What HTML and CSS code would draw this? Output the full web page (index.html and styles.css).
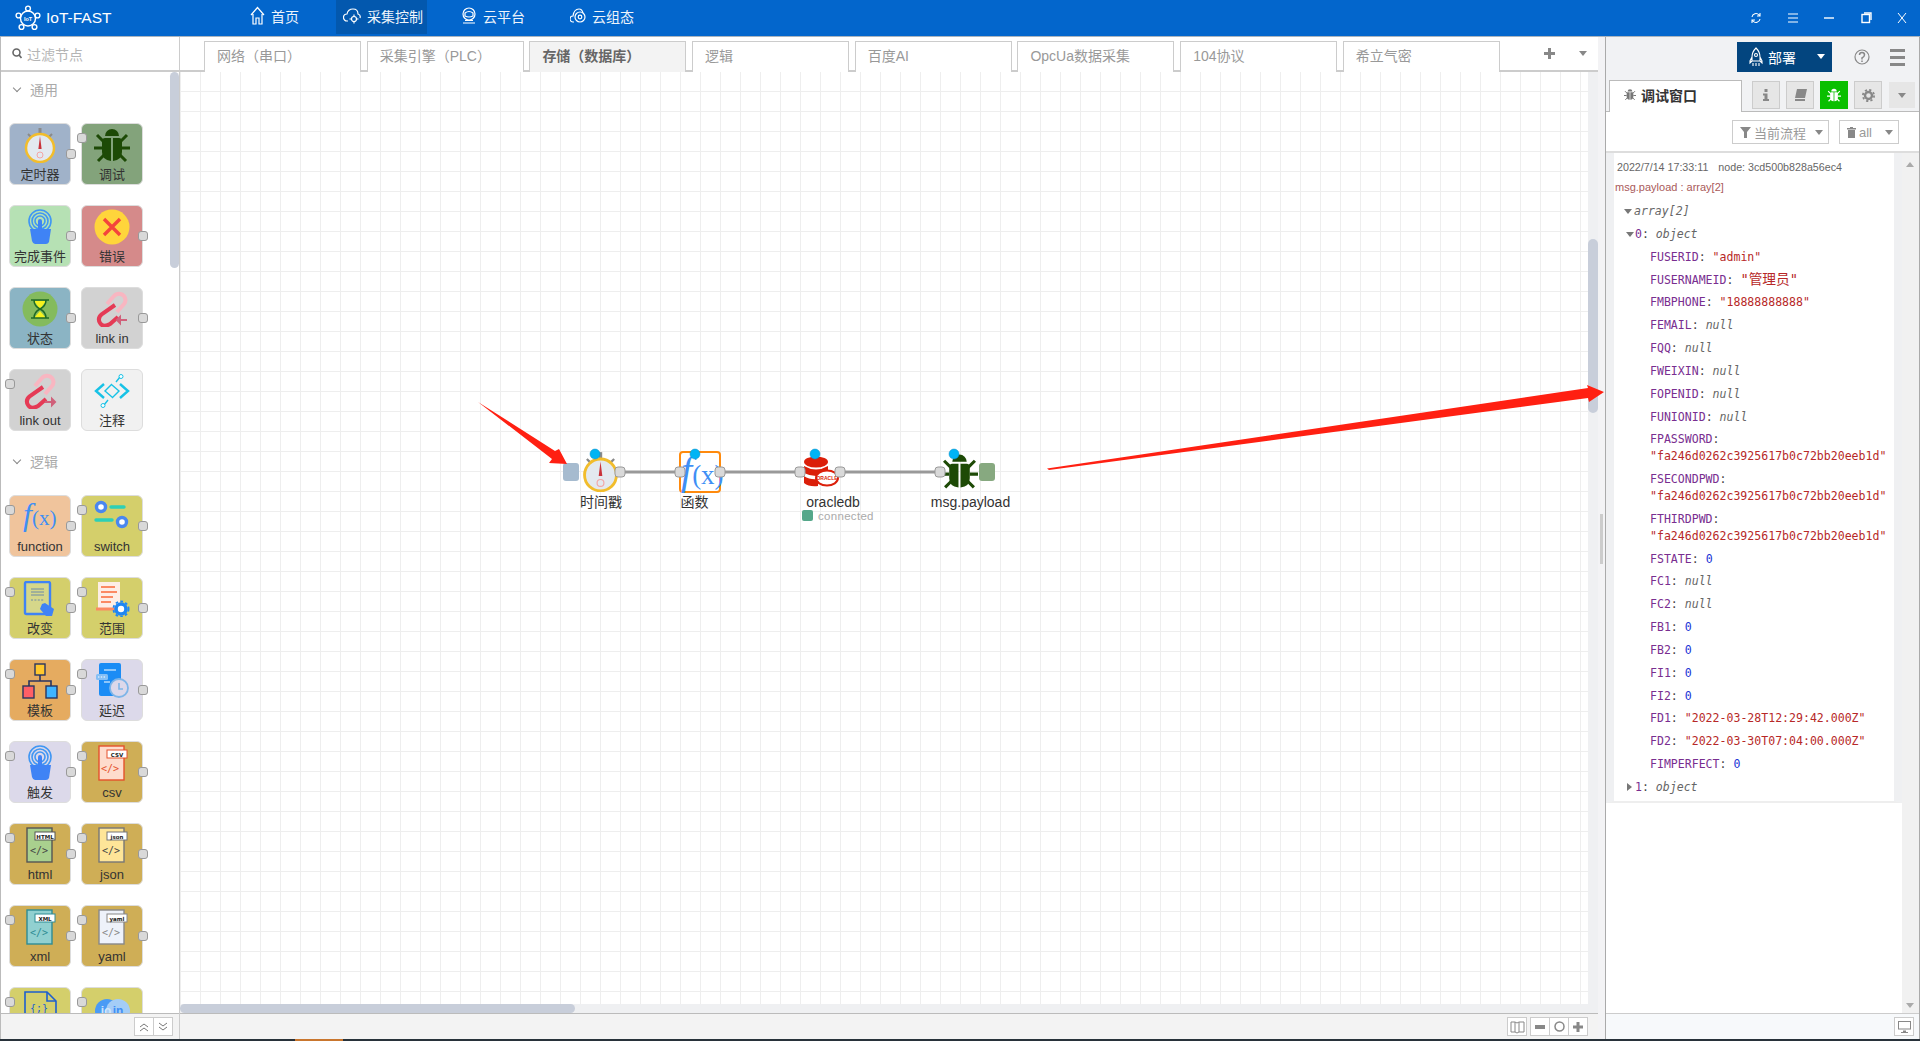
FILE: index.html
```html
<!DOCTYPE html>
<html lang="zh">
<head>
    <meta charset="UTF-8">
    <title>IoT-FAST</title>
    <link rel="stylesheet" href="styles.css">
</head>
<body>
    <!-- shared node icons -->
    <svg class="defs" width="0" height="0">
        <symbol id="i-watch" viewBox="0 0 36 36">
            <rect x="16.5" y="1" width="3" height="6" fill="#8a8a8a"/>
            <path d="M6 7l3 3M30 7l-3 3" stroke="#8a8a8a" stroke-width="2"/>
            <circle cx="18" cy="21" r="14" fill="#e3e9ef" stroke="#f2bd2c" stroke-width="2.5"/>
            <path d="M18 9l1.6 13h-3.200z" fill="#c9333a"/>
            <circle cx="18" cy="28" r="3" fill="none" stroke="#f3a5a5"/>
        </symbol>
        <symbol id="i-bug" viewBox="0 0 36 36">
            <path d="M11 9a7 7 0 0 1 14 0z" fill="#1d4a06"/>
            <path d="M17 11h-6q-3 0-3 4v10q0 8 9 9zM19 11h6q3 0 3 4v10q0 8-9 9z" fill="#1d4a06"/>
            <path d="M10 15l-7-7M26 15l7-7M8 21H0M28 21h8M10 28l-6 6M26 28l6 6" stroke="#1d4a06" stroke-width="3"/>
        </symbol>
        <symbol id="i-touch" viewBox="0 0 36 36">
            <g fill="none" stroke="#3f96f3" stroke-width="1.6">
                <circle cx="18" cy="12" r="11"/>
                <circle cx="18" cy="12" r="8"/>
                <circle cx="18" cy="12" r="5"/>
            </g>
            <path d="M16 12a2 2 0 0 1 4 0v8h9l-2 13q-1 2-3 2H13q-2 0-3-3l-2-12h8z" fill="#3f83f5"/>
        </symbol>
        <symbol id="i-error" viewBox="0 0 36 36">
            <circle cx="18" cy="18" r="17.5" fill="#ffd53b"/>
            <path d="M10 10l16 16M26 10L10 26" stroke="#f4453c" stroke-width="3.4"/>
        </symbol>
        <symbol id="i-status" viewBox="0 0 36 36">
            <circle cx="18" cy="18" r="17.5" fill="#84bb5d"/>
            <path d="M12 10l6 8 6-8zM12 27l6-7 6 7z" fill="#f5f21e"/>
            <path d="M9 9h18M9 27h18M12 9q0 6 6 9 6-3 6-9M12 27q0-6 6-9 6 3 6 9" fill="none" stroke="#1f6b26" stroke-width="1.5"/>
        </symbol>
        <symbol id="i-linkin" viewBox="0 0 36 36">
            <path d="M13 13l7-8a6.500 6.500 0 0 1 10 0q3 4 0 8l-7 8" fill="none" stroke="#f8b6c1" stroke-width="4"/>
            <path d="M21 14L8 23q-5 4-2 9t10 1l8-7" fill="none" stroke="#e53a55" stroke-width="4"/>
            <path d="M23 29h10M23 29l3-3v6z" stroke="#d0607a" stroke-width="2" fill="#d0607a"/>
        </symbol>
        <symbol id="i-linkout" viewBox="0 0 36 36">
            <path d="M13 13l7-8a6.500 6.500 0 0 1 10 0q3 4 0 8l-7 8" fill="none" stroke="#f8b6c1" stroke-width="4"/>
            <path d="M21 14L8 23q-5 4-2 9t10 1l8-7" fill="none" stroke="#e53a55" stroke-width="4"/>
            <path d="M23 29h10M33 29l-3-3v6z" stroke="#d0607a" stroke-width="2" fill="#d0607a"/>
        </symbol>
        <symbol id="i-comment" viewBox="0 0 36 36">
            <g fill="none" stroke="#17c2e6" stroke-width="2.4">
                <path d="M10 11l-8 7 8 7M26 11l8 7-8 7"/>
                <path d="M18 11l-7 7 7 6M18 25l7-7-7-6" stroke-width="1.4"/>
            </g>
            <path d="M26 4l-4 5M10 32l4-5" stroke="#17c2e6" stroke-width="1.4"/>
            <circle cx="27" cy="3.500" r="2" fill="#fff" stroke="#17c2e6"/>
            <circle cx="9" cy="32.500" r="2" fill="#fff" stroke="#17c2e6"/>
        </symbol>
        <symbol id="i-switch" viewBox="0 0 36 36">
            <circle cx="7" cy="8" r="4.500" fill="#fff" stroke="#4a87ef" stroke-width="3.400"/>
            <circle cx="28" cy="23" r="4.500" fill="#fff" stroke="#4a87ef" stroke-width="3.400"/>
            <path d="M17 8h13M2 21h16" stroke="#2dd0b6" stroke-width="3.400" stroke-linecap="round"/>
        </symbol>
        <symbol id="i-change" viewBox="0 0 36 36">
            <rect x="3" y="1" width="25" height="32" rx="1.500" fill="#d5d78a" stroke="#3f83f5" stroke-width="2.400"/>
            <path d="M9 8h13M9 11h13M9 14h13" stroke="#6d8aa8"/>
            <path d="M9 19h13" stroke="#6d8aa8" stroke-dasharray="2 1.400"/>
            <path d="M20 23l3-1 9 6-2 7-6 0-6-7z" fill="#3f83f5"/>
        </symbol>
        <symbol id="i-range" viewBox="0 0 36 36">
            <rect x="4" y="1" width="22" height="28" fill="#fdeee6"/>
            <path d="M7 6h14M7 11h16M7 16h12M7 21h10" stroke="#fb8a63" stroke-width="2"/>
            <path d="M2 28h20" stroke="#fb8a63" stroke-width="3"/>
            <circle cx="27" cy="28" r="5" fill="#fff" stroke="#1d86f5" stroke-width="3.600"/>
            <circle cx="27" cy="28" r="7.600" fill="none" stroke="#1d86f5" stroke-width="1.800" stroke-dasharray="2.600 2.400"/>
        </symbol>
        <symbol id="i-template" viewBox="0 0 36 36">
            <path d="M18 12v6M7 26v-8h22v8" fill="none" stroke="#2a3560" stroke-width="1.600"/>
            <rect x="13" y="1" width="10" height="11" fill="#ffc72c" stroke="#2a3560" stroke-width="1.400"/>
            <rect x="1" y="23" width="11" height="12" fill="#ff5f66" stroke="#2a3560" stroke-width="1.400"/>
            <rect x="24" y="23" width="11" height="12" fill="#3fb4ff" stroke="#2a3560" stroke-width="1.400"/>
        </symbol>
        <symbol id="i-delay" viewBox="0 0 36 36">
            <rect x="5" y="0" width="22" height="33" rx="2" fill="#1b8cf5"/>
            <path d="M10 7h12M10 19h6" stroke="#fff" stroke-width="1.200"/>
            <rect x="2" y="11" width="12" height="6" rx="1.500" fill="#86bff5"/>
            <path d="M4 14h8" stroke="#fff" stroke-dasharray="1.400 1.400"/>
            <circle cx="25" cy="25" r="9" fill="#dcd8ea" stroke="#7eb5e8" stroke-width="1.800"/>
            <path d="M25 20v6h4" fill="none" stroke="#7eb5e8" stroke-width="1.600"/>
        </symbol>
        <symbol id="i-oracle" viewBox="0 0 36 32">
            <ellipse cx="13" cy="6" rx="12" ry="5.500" fill="#db1f0a"/>
            <path d="M1 10q12 7 24 0v7q-12 6-24 0zM1 20q6 4 14 3v7Q6 31 1 27z" fill="#db1f0a"/>
            <ellipse cx="24" cy="22" rx="11" ry="7.500" fill="#fff" stroke="#db1f0a" stroke-width="2"/>
            <text x="24" y="24" class="oracle-txt" text-anchor="middle">ORACLE</text>
        </symbol>
    </svg>

    <header class="topbar">
        <div class="logo">
            <svg width="26" height="26" viewBox="0 0 26 26" fill="none" stroke="#fff" stroke-width="1.400">
                <circle cx="13" cy="13.500" r="7.500"/>
                <circle cx="13" cy="3.500" r="2.400"/>
                <circle cx="3.500" cy="10.500" r="2.400"/>
                <circle cx="22.500" cy="10.500" r="2.400"/>
                <circle cx="6.500" cy="22" r="2.400"/>
                <circle cx="19.500" cy="22" r="2.400"/>
                <text x="13" y="15.500" class="logo-mini" text-anchor="middle">IoT</text>
            </svg>
            <span>IoT-FAST</span>
        </div>
        <nav class="nav">
            <a class="nav-item">
                <svg width="15" height="20" viewBox="0 0 15 20" fill="none" stroke="#fff" stroke-width="1.200"><path d="M1 9l6.500-7.500L14 9M3 8v10h3v-6h3v6h3V8"/></svg>
                首页
            </a>
            <a class="nav-item active">
                <svg width="18" height="18" viewBox="0 0 18 18" fill="none" stroke="#fff" stroke-width="1.200"><path d="M5 14H4a3.500 3.500 0 0 1 0-7q1-5 6-5 5 0 5 5 3 1 2 4"/><circle cx="11" cy="12" r="2.500"/><path d="M11 7.500v2M11 14.500v2M6.500 12h2M13.500 12h2"/></svg>
                采集控制
            </a>
            <a class="nav-item">
                <svg width="16" height="18" viewBox="0 0 16 18" fill="none" stroke="#fff" stroke-width="1.200"><circle cx="8" cy="7" r="6"/><path d="M4 6q4-3 8 0v3q-4 2-8 0zM2 16h12M4 13.500h8"/></svg>
                云平台
            </a>
            <a class="nav-item">
                <svg width="16" height="18" viewBox="0 0 16 18" fill="none" stroke="#fff" stroke-width="1.200"><path d="M4 15H3a3 3 0 0 1 0-6q1-7 6-7 3 0 4 4"/><circle cx="10" cy="10" r="5"/><circle cx="10" cy="10" r="1.800"/></svg>
                云组态
            </a>
        </nav>
        <div class="win-controls">
            <svg width="12" height="12" viewBox="0 0 12 12" fill="none" stroke="#fff" stroke-width="1.100"><path d="M2 5a4 4 0 0 1 7-2l1 1M10 7a4 4 0 0 1-7 2L2 8M10 1v3H7M2 11V8h3"/></svg>
            <svg width="12" height="12" viewBox="0 0 12 12" stroke="#fff" stroke-width="1.200"><path d="M1 2h10M1 6h10M1 10h10"/></svg>
            <svg width="12" height="12" viewBox="0 0 12 12" stroke="#fff" stroke-width="1.400"><path d="M1 6h10"/></svg>
            <svg width="12" height="12" viewBox="0 0 12 12" fill="none" stroke="#fff" stroke-width="1.400"><rect x="2" y="2.500" width="7.500" height="8"/><path d="M4 1h7v7"/></svg>
            <svg width="12" height="12" viewBox="0 0 12 12" stroke="#fff" stroke-width="1"><path d="M2 1l8 10M10 1L2 11"/></svg>
        </div>
    </header>

    <main class="main">
        <aside class="palette">
            <div class="filter">
                <svg width="10" height="11" viewBox="0 0 10 11" fill="none" stroke="#666" stroke-width="1.600"><circle cx="4.500" cy="4.500" r="3.500"/><path d="M7 7l2.500 3"/></svg>
                <span>过滤节点</span>
            </div>
            <div class="palette-list">
                <div class="cat-title"><i class="chev"></i>通用</div>
                <div class="node-grid">
                    <div class="pnode c-timer"><svg class="picon"><use href="#i-watch"/></svg><span>定时器</span><b class="port out"></b></div>
                    <div class="pnode c-debug"><svg class="picon"><use href="#i-bug"/></svg><span>调试</span><b class="port in"></b></div>
                    <div class="pnode c-done"><svg class="picon"><use href="#i-touch"/></svg><span>完成事件</span><b class="port out"></b></div>
                    <div class="pnode c-error"><svg class="picon"><use href="#i-error"/></svg><span>错误</span><b class="port out"></b></div>
                    <div class="pnode c-status"><svg class="picon"><use href="#i-status"/></svg><span>状态</span><b class="port out"></b></div>
                    <div class="pnode c-link"><svg class="picon"><use href="#i-linkin"/></svg><span>link in</span><b class="port out"></b></div>
                    <div class="pnode c-link"><svg class="picon"><use href="#i-linkout"/></svg><span>link out</span><b class="port in"></b></div>
                    <div class="pnode c-comment"><svg class="picon"><use href="#i-comment"/></svg><span>注释</span></div>
                </div>
                <div class="cat-title second"><i class="chev"></i>逻辑</div>
                <div class="node-grid">
                    <div class="pnode c-func"><svg class="picon" viewBox="0 0 36 36"><text x="1" y="26" class="fx"><tspan class="fx-f">f</tspan>(x)</text></svg><span>function</span><b class="port in"></b><b class="port out"></b></div>
                    <div class="pnode c-olive"><svg class="picon"><use href="#i-switch"/></svg><span>switch</span><b class="port in"></b><b class="port out"></b></div>
                    <div class="pnode c-olive"><svg class="picon"><use href="#i-change"/></svg><span>改变</span><b class="port in"></b><b class="port out"></b></div>
                    <div class="pnode c-olive"><svg class="picon"><use href="#i-range"/></svg><span>范围</span><b class="port in"></b><b class="port out"></b></div>
                    <div class="pnode c-template"><svg class="picon"><use href="#i-template"/></svg><span>模板</span><b class="port in"></b><b class="port out"></b></div>
                    <div class="pnode c-lilac"><svg class="picon"><use href="#i-delay"/></svg><span>延迟</span><b class="port in"></b><b class="port out"></b></div>
                    <div class="pnode c-lilac"><svg class="picon"><use href="#i-touch"/></svg><span>触发</span><b class="port in"></b><b class="port out"></b></div>
                    <div class="pnode c-parser">
                        <svg class="picon" viewBox="0 0 36 36"><rect x="5" y="1" width="25" height="34" fill="#fedccd" stroke="#e4512c" stroke-width="1.400"/><rect x="13" y="5" width="20" height="8" fill="#fff" stroke="#e4512c"/><text x="23" y="11.500" class="tag">CSV</text><text x="16" y="27" class="code c-red">&lt;/&gt;</text></svg>
                        <span>csv</span><b class="port in"></b><b class="port out"></b>
                    </div>
                    <div class="pnode c-parser">
                        <svg class="picon" viewBox="0 0 36 36"><rect x="5" y="1" width="25" height="34" fill="#a9d08e" stroke="#555" stroke-width="1.400"/><rect x="13" y="5" width="20" height="8" fill="#fff" stroke="#555"/><text x="23" y="11.500" class="tag">HTML</text><text x="17" y="27" class="code">&lt;/&gt;</text></svg>
                        <span>html</span><b class="port in"></b><b class="port out"></b>
                    </div>
                    <div class="pnode c-parser">
                        <svg class="picon" viewBox="0 0 36 36"><rect x="5" y="1" width="25" height="34" fill="#fee598" stroke="#777" stroke-width="1.400"/><rect x="13" y="5" width="20" height="8" fill="#fff" stroke="#777"/><text x="23" y="11.500" class="tag">json</text><text x="17" y="27" class="code">&lt;/&gt;</text></svg>
                        <span>json</span><b class="port in"></b><b class="port out"></b>
                    </div>
                    <div class="pnode c-parser">
                        <svg class="picon" viewBox="0 0 36 36"><rect x="5" y="1" width="25" height="34" fill="#91d0d0" stroke="#2e8c94" stroke-width="1.400"/><rect x="13" y="5" width="20" height="8" fill="#fff" stroke="#2e8c94"/><text x="23" y="11.500" class="tag">XML</text><text x="17" y="27" class="code c-teal">&lt;/&gt;</text></svg>
                        <span>xml</span><b class="port in"></b><b class="port out"></b>
                    </div>
                    <div class="pnode c-parser">
                        <svg class="picon" viewBox="0 0 36 36"><rect x="5" y="1" width="25" height="34" fill="#eef2fa" stroke="#888" stroke-width="1.400"/><rect x="13" y="5" width="20" height="8" fill="#fff" stroke="#888"/><text x="23" y="11.500" class="tag">yaml</text><text x="17" y="27" class="code c-grey">&lt;/&gt;</text></svg>
                        <span>yaml</span><b class="port in"></b><b class="port out"></b>
                    </div>
                    <div class="pnode c-olive">
                        <svg class="picon" viewBox="0 0 36 36"><path d="M3 1h22l9 9v25H3z" fill="none" stroke="#1d5fd0" stroke-width="1.600"/><path d="M25 1v9h9" fill="none" stroke="#1d5fd0" stroke-width="1.600"/><text x="17" y="21" class="code c-blue">{;}</text></svg>
                        <span></span><b class="port in"></b>
                    </div>
                    <div class="pnode c-olive">
                        <svg class="picon" viewBox="0 0 36 36"><circle cx="13" cy="20" r="12" fill="#4a9bf5"/><circle cx="24" cy="20" r="12" fill="#a4cdf7"/><text x="12" y="24" class="io">io</text><text x="24" y="24" class="io alt">in</text></svg>
                        <span></span><b class="port in"></b>
                    </div>
                </div>
                <div class="palette-thumb"></div>
            </div>
            <div class="palette-foot">
                <div class="btn-group">
                    <button class="tool-btn"><svg width="10" height="10" viewBox="0 0 10 10" fill="none" stroke="#777"><path d="M1 5l4-3 4 3M1 9l4-3 4 3"/></svg></button>
                    <button class="tool-btn"><svg width="10" height="10" viewBox="0 0 10 10" fill="none" stroke="#777"><path d="M1 1l4 3 4-3M1 5l4 3 4-3"/></svg></button>
                </div>
            </div>
        </aside>

        <section class="workspace">
            <div class="tabbar">
                <div class="tab">网络（串口）</div>
                <div class="tab">采集引擎（PLC）</div>
                <div class="tab active">存储（数据库）</div>
                <div class="tab">逻辑</div>
                <div class="tab">百度AI</div>
                <div class="tab">OpcUa数据采集</div>
                <div class="tab">104协议</div>
                <div class="tab">希立气密</div>
                <div class="tab-tools">
                    <span class="plus"></span>
                    <i class="caret"></i>
                </div>
            </div>
            <div class="canvas-row">
                <div class="canvas">
                    <svg class="flow" width="1408" height="932" viewBox="180 72 1408 932">
                        <path class="wire" d="M620 472H680M720 472H800M840 472H940"/>

                        <rect x="563" y="463" width="16" height="18" rx="3" fill="#a6bbcf"/>
                        <use href="#i-watch" x="580" y="451" width="41" height="41"/>
                        <circle class="dot" cx="595" cy="454" r="5"/>
                        <rect class="wport" x="615" y="467" width="10" height="10" rx="3"/>
                        <text class="nlabel" x="601" y="507" text-anchor="middle">时间戳</text>

                        <rect x="680" y="452" width="40" height="40" rx="3" fill="#fff" stroke="#ff8a0d" stroke-width="2"/>
                        <text x="681" y="484" class="fx big"><tspan class="fx-f">f</tspan>(x)</text>
                        <circle class="dot" cx="695" cy="454" r="5"/>
                        <rect class="wport" x="675" y="467" width="10" height="10" rx="3"/>
                        <rect class="wport" x="715" y="467" width="10" height="10" rx="3"/>
                        <text class="nlabel" x="694.500" y="507" text-anchor="middle">函数</text>

                        <use href="#i-oracle" x="803" y="456" width="36" height="32"/>
                        <circle class="dot" cx="815" cy="454" r="5"/>
                        <rect class="wport" x="795" y="467" width="10" height="10" rx="3"/>
                        <rect class="wport" x="835" y="467" width="10" height="10" rx="3"/>
                        <text class="nlabel" x="833" y="507" text-anchor="middle">oracledb</text>
                        <rect x="802" y="510" width="11" height="11" rx="2" fill="#55a78a"/>
                        <text class="nstatus" x="818" y="520">connected</text>

                        <use href="#i-bug" x="941" y="452" width="37" height="38"/>
                        <circle class="dot" cx="954" cy="454" r="5"/>
                        <rect class="wport" x="935" y="467" width="10" height="10" rx="3"/>
                        <rect x="979" y="463" width="16" height="18" rx="3" fill="#87a980"/>
                        <text class="nlabel" x="970.500" y="507" text-anchor="middle">msg.payload</text>
                    </svg>
                </div>
                <div class="vbar"><div class="vthumb"></div></div>
            </div>
            <div class="hbar"><div class="hthumb"></div></div>
            <div class="work-foot">
                <button class="tool-btn map"><svg width="15" height="14" viewBox="0 0 15 14" fill="none" stroke="#888"><path d="M1 2h4l2 1 2-1h5v10H9l-2 1-2-1H1zM5 2v10M9 2v10"/></svg></button>
                <div class="btn-group">
                    <button class="tool-btn"><svg width="10" height="4" viewBox="0 0 10 4"><rect width="10" height="4" fill="#888"/></svg></button>
                    <button class="tool-btn"><svg width="11" height="11" viewBox="0 0 11 11" fill="none" stroke="#888" stroke-width="1.500"><circle cx="5.500" cy="5.500" r="4.500"/></svg></button>
                    <button class="tool-btn"><svg width="10" height="10" viewBox="0 0 10 10"><path d="M3.500 0h3v3.500H10v3H6.500V10h-3V6.500H0v-3h3.500z" fill="#888"/></svg></button>
                </div>
            </div>
        </section>

        <div class="separator"><div class="handle"></div></div>

        <aside class="sidebar">
            <div class="side-head">
                <button class="deploy">
                    <svg width="14" height="20" viewBox="0 0 14 20" fill="none" stroke="#fff" stroke-width="1.100"><path d="M7 1q4 4 4 9v4H3v-4q0-5 4-9zM3 10l-2 4v2l2-2M11 10l2 4v2l-2-2M4 16v3M7 16v3M10 16v3"/><circle cx="7" cy="8" r="1.500"/></svg>
                    <span>部署</span>
                    <i class="caret white"></i>
                </button>
                <svg class="help" width="16" height="16" viewBox="0 0 16 16" fill="none" stroke="#888" stroke-width="1.200"><circle cx="8" cy="8" r="7"/><path d="M5.500 6q0-2.500 2.500-2.500T10.500 6q0 1.500-2.500 3v1.500M8 11.500v1.500" stroke-width="1.500"/></svg>
                <div class="burger"><i></i><i></i><i></i></div>
            </div>
            <div class="side-tabs">
                <div class="side-tab">
                    <svg width="12" height="13" viewBox="0 0 36 36"><path d="M11 9a7 7 0 0 1 14 0z" fill="#777"/><path d="M17 11h-6q-3 0-3 4v10q0 8 9 9zM19 11h6q3 0 3 4v10q0 8-9 9z" fill="#777"/><path d="M10 15l-7-7M26 15l7-7M8 21H0M28 21h8M10 28l-6 6M26 28l6 6" stroke="#777" stroke-width="3"/></svg>
                    <span>调试窗口</span>
                </div>
                <button class="side-btn"><svg width="8" height="12" viewBox="0 0 8 12" fill="#888"><rect x="2.500" width="3" height="3"/><path d="M1 4.500h4.500V10H7v2H1v-2h1.500V6.500H1z"/></svg></button>
                <button class="side-btn"><svg width="13" height="12" viewBox="0 0 13 12" fill="#888"><path d="M3 0h10l-2 9H1zM1 10h10v2H1z"/></svg></button>
                <button class="side-btn on"><svg width="14" height="14" viewBox="0 0 36 36"><path d="M11 9a7 7 0 0 1 14 0z" fill="#fff"/><path d="M17 11h-6q-3 0-3 4v10q0 8 9 9zM19 11h6q3 0 3 4v10q0 8-9 9z" fill="#fff"/><path d="M10 15l-7-7M26 15l7-7M8 21H0M28 21h8M10 28l-6 6M26 28l6 6" stroke="#fff" stroke-width="3"/></svg></button>
                <button class="side-btn"><svg width="13" height="13" viewBox="0 0 13 13"><circle cx="6.500" cy="6.500" r="3.500" fill="none" stroke="#888" stroke-width="2.400"/><circle cx="6.500" cy="6.500" r="5.600" fill="none" stroke="#888" stroke-width="1.800" stroke-dasharray="2.200 2.200"/></svg></button>
                <button class="side-more"><i class="caret"></i></button>
            </div>
            <div class="side-tools">
                <button class="filter-btn wide">
                    <svg width="11" height="11" viewBox="0 0 11 11"><path d="M0 0h11L7 5v6H4V5z" fill="#888"/></svg>
                    <span>当前流程</span><i class="caret"></i>
                </button>
                <button class="filter-btn">
                    <svg width="9" height="11" viewBox="0 0 9 11"><path d="M0 1h3V0h3v1h3v1.500H0zM1 3h7v8H1z" fill="#888"/></svg>
                    <span>all</span><i class="caret"></i>
                </button>
            </div>
            <div class="debug">
                <div class="debug-list">
                    <div class="msg">
                        <div class="msg-meta"><span>2022/7/14 17:33:11</span><span>node: 3cd500b828a56ec4</span></div>
                        <div class="msg-name">msg.payload : array[2]</div>
                        <div class="tree">
                            <div class="row top"><i class="tri down"></i><em>array[2]</em></div>
                            <div class="row idx"><i class="tri down"></i><span class="k">0</span>: <em>object</em></div>
                            <div class="row"><span class="k">FUSERID</span>: <span class="s">"admin"</span></div>
                            <div class="row"><span class="k">FUSERNAMEID</span>: <span class="s cjk">"管理员"</span></div>
                            <div class="row"><span class="k">FMBPHONE</span>: <span class="s">"18888888888"</span></div>
                            <div class="row"><span class="k">FEMAIL</span>: <em>null</em></div>
                            <div class="row"><span class="k">FQQ</span>: <em>null</em></div>
                            <div class="row"><span class="k">FWEIXIN</span>: <em>null</em></div>
                            <div class="row"><span class="k">FOPENID</span>: <em>null</em></div>
                            <div class="row"><span class="k">FUNIONID</span>: <em>null</em></div>
                            <div class="row"><span class="k">FPASSWORD</span>: <span class="s">"fa246d0262c3925617b0c72bb20eeb1d"</span></div>
                            <div class="row"><span class="k">FSECONDPWD</span>: <span class="s">"fa246d0262c3925617b0c72bb20eeb1d"</span></div>
                            <div class="row"><span class="k">FTHIRDPWD</span>: <span class="s">"fa246d0262c3925617b0c72bb20eeb1d"</span></div>
                            <div class="row"><span class="k">FSTATE</span>: <span class="n">0</span></div>
                            <div class="row"><span class="k">FC1</span>: <em>null</em></div>
                            <div class="row"><span class="k">FC2</span>: <em>null</em></div>
                            <div class="row"><span class="k">FB1</span>: <span class="n">0</span></div>
                            <div class="row"><span class="k">FB2</span>: <span class="n">0</span></div>
                            <div class="row"><span class="k">FI1</span>: <span class="n">0</span></div>
                            <div class="row"><span class="k">FI2</span>: <span class="n">0</span></div>
                            <div class="row"><span class="k">FD1</span>: <span class="s">"2022-03-28T12:29:42.000Z"</span></div>
                            <div class="row"><span class="k">FD2</span>: <span class="s">"2022-03-30T07:04:00.000Z"</span></div>
                            <div class="row"><span class="k">FIMPERFECT</span>: <span class="n">0</span></div>
                            <div class="row idx"><i class="tri right"></i><span class="k">1</span>: <em>object</em></div>
                        </div>
                    </div>
                </div>
                <div class="debug-scroll">
                    <i class="tri up"></i>
                    <i class="tri dn"></i>
                </div>
            </div>
            <div class="side-foot">
                <button class="tool-btn"><svg width="13" height="12" viewBox="0 0 13 12" fill="#888"><path d="M0 0h13v8.500H0zM1 1v6.500h11V1zM5 9.500h3V11h2v1H3v-1h2z"/></svg></button>
            </div>
        </aside>
    </main>

    <div class="taskstrip"><i></i></div>

    <!-- red annotation arrows drawn over the screenshot -->
    <svg class="annot" width="1920" height="1041">
        <polygon points="478,402 555,451 559,449 567,464 549,463 552,459" fill="#ff2012"/>
        <polygon points="1047,468.500 1588,388 1587,385 1604,392 1589,402 1588,398 1049,470" fill="#ff2012"/>
    </svg>
</body>
</html>
```

FILE: styles.css
```css
* {
    box-sizing: border-box;
}

body {
    margin: 0;
    width: 1920px;
    height: 1041px;
    overflow: hidden;
    position: relative;
    display: flex;
    flex-direction: column;
    font-family: "Liberation Sans", "Noto Sans CJK SC", sans-serif;
    font-size: 13px;
    color: #555;
    background: #fff;
}

button {
    font-family: inherit;
    padding: 0;
    margin: 0;
}

.defs {
    position: absolute;
}

/* top bar */
.topbar {
    height: 37px;
    flex: none;
    display: flex;
    background: #0366cc;
    border-bottom: 1px solid #a9b4bf;
    color: #fff;
}

.logo {
    width: 243px;
    display: flex;
    align-items: center;
    gap: 5px;
    padding: 0 0 1px 15px;
    font-size: 15.5px;
}

.logo-mini {
    font-size: 5.5px;
    fill: #fff;
    stroke: none;
    font-weight: bold;
}

.nav {
    display: grid;
    grid-template-columns: 93px 118px 109px auto;
    justify-items: start;
}

.nav-item {
    height: 34px;
    display: flex;
    align-items: center;
    gap: 6px;
    padding: 0 4px 2px 7px;
    font-size: 14px;
    color: #eef4fb;
}

.nav-item.active {
    background: #0358ae;
}

.win-controls {
    margin-left: auto;
    display: flex;
    align-items: center;
    gap: 24.5px;
    padding-right: 12px;
}

/* main row */
.main {
    flex: 1;
    display: flex;
    min-height: 0;
}

/* palette */
.palette {
    width: 180px;
    flex: none;
    display: flex;
    flex-direction: column;
    border-left: 1px solid #bbb;
    border-right: 1px solid #ccc;
}

.filter {
    height: 35px;
    flex: none;
    display: flex;
    align-items: center;
    gap: 5px;
    padding-left: 11px;
    border-bottom: 2px solid #ccc;
    font-size: 14px;
    color: #b5b5b5;
}

.palette-list {
    flex: 1;
    position: relative;
    overflow: hidden;
}

.palette-thumb {
    position: absolute;
    top: 0;
    right: 0;
    width: 9px;
    height: 196px;
    background: #c8ceda;
    border-radius: 5px;
}

.cat-title {
    height: 36px;
    margin-bottom: 15px;
    display: flex;
    align-items: center;
    padding: 0 0 2px 13px;
    gap: 10px;
    font-size: 14px;
    color: #aaa;
}

.cat-title.second {
    margin-top: 13px;
}

.chev {
    width: 6px;
    height: 6px;
    margin-top: -3px;
    border-right: 1px solid #888;
    border-bottom: 1px solid #888;
    transform: rotate(45deg);
}

.node-grid {
    display: grid;
    grid-template-columns: 62px 62px;
    grid-auto-rows: 62px;
    column-gap: 10px;
    row-gap: 20px;
    padding-left: 8px;
}

.pnode {
    position: relative;
    display: flex;
    flex-direction: column;
    align-items: center;
    border: 1px solid #ddd;
    border-radius: 6px;
    color: #333;
    font-size: 13px;
    line-height: 16px;
    padding-top: 3px;
}

.picon {
    width: 36px;
    height: 36px;
    flex: none;
    margin-bottom: 4px;
    overflow: visible;
}

.port {
    position: absolute;
    width: 10px;
    height: 10px;
    background: #d9d9d9;
    border: 1px solid #999;
    border-radius: 3px;
}

.port.out {
    right: -6px;
    top: 25px;
}

.port.in {
    left: -5px;
    top: 9px;
}

.c-timer { background: #a0b2c9; }
.c-debug { background: #83a37b; }
.c-done { background: #b6e1b4; }
.c-error { background: #d58a8a; }
.c-status { background: #8bb4c4; }
.c-link { background: #d2d2d2; }
.c-comment { background: #f1f1f1; }
.c-func { background: #f0c49c; }
.c-olive { background: #d4cf6b; }
.c-template { background: #e5ab60; }
.c-lilac { background: #dcd9ea; }
.c-parser { background: #cfae56; }

.fx {
    font-family: "Liberation Serif", serif;
    font-size: 21px;
    fill: #3f8ff5;
}

.fx-f {
    font-style: italic;
    font-size: 32px;
}

.fx.big {
    font-size: 27px;
}

.fx.big .fx-f {
    font-size: 40px;
}

.tag {
    font-family: "DejaVu Sans", sans-serif;
    font-size: 5.5px;
    font-weight: bold;
    fill: #222;
    text-anchor: middle;
}

.code {
    font-family: "DejaVu Sans Mono", monospace;
    font-size: 10px;
    fill: #444;
    text-anchor: middle;
}

.code.c-red { fill: #e4512c; }
.code.c-teal { fill: #2e8c94; }
.code.c-grey { fill: #888; }
.code.c-blue { fill: #1d5fd0; }

.io {
    font-size: 12px;
    font-weight: bold;
    fill: #cfe5fb;
    text-anchor: middle;
}

.io.alt {
    fill: #3f8ff5;
}

.palette-foot {
    height: 26px;
    flex: none;
    display: flex;
    align-items: center;
    justify-content: flex-end;
    padding-right: 6px;
    background: #f3f3f3;
    border-top: 1px solid #bbb;
    position: relative;
}

.btn-group {
    display: flex;
}

.tool-btn {
    width: 20px;
    height: 19px;
    display: flex;
    align-items: center;
    justify-content: center;
    background: #fff;
    border: 1px solid #ccc;
    margin-left: -1px;
}

/* workspace */
.workspace {
    flex: 1;
    min-width: 0;
    display: flex;
    flex-direction: column;
}

.tabbar {
    height: 35px;
    flex: none;
    display: flex;
    align-items: flex-end;
    gap: 5.7px;
    padding-left: 24px;
    border-bottom: 2px solid #ccc;
}

.tab {
    width: 157px;
    height: 31px;
    margin-bottom: -2px;
    padding: 4px 0 0 12px;
    border: 1px solid #ccc;
    border-bottom: 0;
    background: #fff;
    color: #999;
    font-size: 14px;
    line-height: 20px;
    white-space: nowrap;
}

.tab.active {
    background: #f3f3f3;
    color: #666;
    font-weight: bold;
}

.tab-tools {
    margin-left: auto;
    align-self: center;
    display: flex;
    align-items: center;
    gap: 24px;
    padding-right: 11px;
}

.plus {
    width: 11px;
    height: 11px;
    background:
        linear-gradient(#888, #888) center / 11px 3px no-repeat,
        linear-gradient(#888, #888) center / 3px 11px no-repeat;
}

.caret {
    display: block;
    width: 0;
    height: 0;
    border-left: 4px solid transparent;
    border-right: 4px solid transparent;
    border-top: 5px solid #888;
}

.caret.white {
    border-top-color: #fff;
}

.canvas-row {
    flex: 1;
    min-height: 0;
    display: flex;
}

.canvas {
    flex: 1;
    position: relative;
    overflow: hidden;
    background-image:
        linear-gradient(to right, #eee 1px, transparent 1px),
        linear-gradient(to bottom, #eee 1px, transparent 1px);
    background-size: 20px 20px;
    background-position: 0 -1px;
}

.flow {
    position: absolute;
    left: 0;
    top: 0;
}

.wire {
    fill: none;
    stroke: #999;
    stroke-width: 3;
}

.wport {
    fill: #d9d9d9;
    stroke: #999;
}

.dot {
    fill: #00b4f5;
    stroke: #0f8fc4;
    stroke-width: 0.5;
}

.nlabel {
    font-size: 14px;
    fill: #333;
}

.nstatus {
    font-size: 11.5px;
    letter-spacing: 0.3px;
    fill: #aaa;
}

.oracle-txt {
    font-size: 5px;
    fill: #db1f0a;
    font-weight: bold;
}

.vbar {
    width: 10px;
    flex: none;
    background: #eff0f2;
    padding-top: 167px;
}

.vthumb {
    height: 174px;
    background: #c8ceda;
    border-radius: 5px;
}

.hbar {
    height: 9px;
    flex: none;
    background: #eff0f2;
}

.hthumb {
    width: 395px;
    height: 9px;
    background: #c8ceda;
    border-radius: 5px;
}

.work-foot {
    height: 26px;
    flex: none;
    display: flex;
    align-items: center;
    justify-content: flex-end;
    gap: 4px;
    padding-right: 10px;
    background: #f3f3f3;
    border-top: 1px solid #bbb;
}

.tool-btn.map {
    margin: 0;
}

.separator {
    width: 7px;
    flex: none;
    background: #f3f3f5;
    padding: 477px 0 0 2px;
}

.handle {
    width: 3px;
    height: 50px;
    background: #ccc;
}

/* sidebar */
.sidebar {
    width: 315px;
    flex: none;
    display: flex;
    flex-direction: column;
    border-left: 1px solid #aaa;
    border-right: 1px solid #aaa;
}

.side-head {
    height: 40px;
    flex: none;
    display: flex;
    align-items: center;
    padding: 0 0 0 131px;
    background: #f1f2f4;
}

.deploy {
    width: 95px;
    height: 30px;
    display: flex;
    align-items: center;
    padding: 0 0 1px 12px;
    gap: 5px;
    border: 0;
    background: #03457f;
    color: #fff;
    font-size: 14px;
}

.deploy .caret {
    margin-left: 16px;
}

.help {
    margin-left: 22px;
}

.burger {
    margin-left: 20px;
    width: 15px;
}

.burger i {
    display: block;
    height: 3px;
    background: #888;
    margin: 4px 0;
}

.side-tabs {
    height: 35px;
    flex: none;
    display: flex;
    align-items: flex-start;
    padding: 4px 0 0 146px;
    position: relative;
    background: #f1f2f4;
    border-bottom: 1px solid #bbb;
}

.side-tab {
    position: absolute;
    left: 3px;
    top: 3px;
    width: 133px;
    height: 32px;
    display: flex;
    align-items: center;
    gap: 5px;
    padding: 0 0 4px 14px;
    background: #fff;
    border: 1px solid #bbb;
    border-bottom: 0;
    font-size: 14px;
    font-weight: bold;
    color: #333;
}

.side-btn {
    width: 28px;
    height: 28px;
    margin-right: 6px;
    display: flex;
    align-items: center;
    justify-content: center;
    background: #e6e6e6;
    border: 1px solid #ccc;
}

.side-btn.on {
    background: #0abf00;
    border-color: #0abf00;
}

.side-more {
    width: 26px;
    height: 26px;
    margin: 1px 0 0 1px;
    display: flex;
    align-items: center;
    justify-content: center;
    background: #e6e6e6;
    border: 0;
}

.side-tools {
    height: 41px;
    flex: none;
    display: flex;
    align-items: flex-start;
    justify-content: flex-end;
    gap: 10px;
    padding: 8px 20px 0 0;
    border-bottom: 2px solid #ddd;
}

.filter-btn {
    width: 60px;
    height: 24px;
    display: flex;
    align-items: center;
    gap: 3px;
    padding-left: 7px;
    background: #fff;
    border: 1px solid #ccc;
    color: #999;
    font-size: 13px;
}

.filter-btn.wide {
    width: 97px;
}

.filter-btn .caret {
    margin-left: auto;
    margin-right: 5px;
}

.debug {
    flex: 1;
    min-height: 0;
    display: flex;
}

.debug-list {
    flex: 1;
    min-width: 0;
    background: #fff;
}

.msg {
    border-left: 8px solid #eff0f2;
    border-right: 8px solid #eff0f2;
    border-bottom: 2px solid #eee;
    padding: 7px 0 6px 0;
    height: 650px;
}

.msg-meta {
    line-height: 14px;
    font-size: 10.7px;
    color: #666;
    padding-left: 3px;
    display: flex;
    gap: 10px;
}

.msg-name {
    line-height: 14px;
    margin-top: 6px;
    padding-left: 1px;
    font-size: 11px;
    color: #a95a5a;
}

.tree {
    margin-top: 6px;
    font-family: "DejaVu Sans Mono", "Noto Sans CJK SC", monospace;
    font-size: 11.56px;
    color: #444;
}

.row {
    position: relative;
    padding: 3px 4px 3px 36px;
    line-height: 16.85px;
}

.row.top {
    padding-left: 20px;
}

.row.idx {
    padding-left: 21px;
}

.k {
    color: #792e90;
}

.s {
    color: #b72828;
}

.s.cjk {
    font-size: 13.7px;
    line-height: 10px;
}

.n {
    color: #2033d6;
}

.row em {
    color: #666;
    font-style: italic;
}

.tri {
    position: absolute;
    width: 0;
    height: 0;
    border-style: solid;
    border-color: transparent;
}

.tri.down {
    left: 10px;
    top: 9px;
    border-width: 5.5px 4px 0;
    border-top-color: #777;
}

.row.idx .tri.down {
    left: 12px;
}

.tri.right {
    left: 13px;
    top: 7px;
    border-width: 4px 0 4px 5.5px;
    border-left-color: #777;
}

.debug-scroll {
    width: 17px;
    flex: none;
    position: relative;
    background: #f1f1f1;
}

.tri.up {
    left: 4px;
    top: 9px;
    border-width: 0 4px 5px;
    border-bottom-color: #aaa;
}

.tri.dn {
    left: 4px;
    bottom: 5px;
    border-width: 5px 4px 0;
    border-top-color: #aaa;
}

.side-foot {
    height: 26px;
    flex: none;
    display: flex;
    align-items: center;
    justify-content: flex-end;
    padding-right: 5px;
    background: #f7f9fb;
    border-top: 1px solid #ccc;
}

.taskstrip {
    height: 2px;
    flex: none;
    background: #28323a;
}

.taskstrip i {
    display: block;
    width: 48px;
    height: 2px;
    margin-left: 295px;
    background: #c9762e;
}

.annot {
    position: absolute;
    left: 0;
    top: 0;
    pointer-events: none;
}
```
